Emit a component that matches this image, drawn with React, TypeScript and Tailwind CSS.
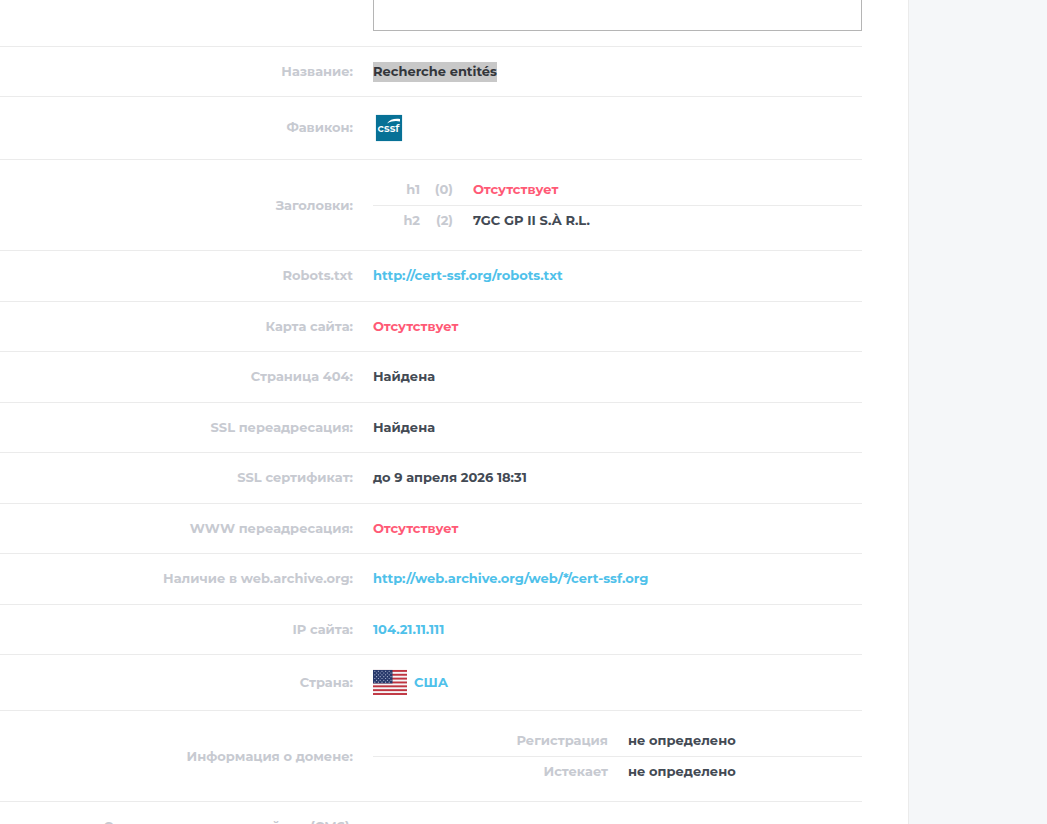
import type { FC, ReactNode } from "react";

interface RowProps {
  label: string;
  children?: ReactNode;
}

const Row: FC<RowProps> = ({ label, children }) => {
  return (
    <tr className="group">
      <th
        scope="row"
        className="w-[353px] border-b border-[#ebebeb] pt-[14px] pb-[15px] text-right font-bold text-[#c7cad1] group-odd:pb-4"
      >
        {label}
      </th>
      <td className="border-b border-[#ebebeb] pt-[14px] pb-[15px] pl-5 group-odd:pb-4">
        {children}
      </td>
    </tr>
  );
};

const Missing = () => <span className="text-[#ff5a76]">Отсутствует</span>;

const TextLink = ({ href, children }: { href: string; children: ReactNode }) => (
  <a href={href} className="text-[#4fc1ea]">
    {children}
  </a>
);

const headings = [
  { tag: "h1", count: 0, text: "" },
  { tag: "h2", count: 2, text: "7GC GP II S.À R.L." },
];

const domainInfo = [
  { name: "Регистрация", value: "не определено" },
  { name: "Истекает", value: "не определено" },
];

const subTable =
  "mt-px w-full border-separate border-spacing-0 [&_tr>*]:border-[#ebebeb] [&_tr>*]:pt-1 [&_tr:first-child>*]:border-b [&_tr:first-child>*]:pb-1.5 [&_tr:last-child>*]:pb-[5px]";

const Headings = () => {
  return (
    <table className={subTable}>
      <tbody>
        {headings.map(({ tag, count, text }) => (
          <tr key={tag}>
            <th
              scope="row"
              className="w-[47px] text-right font-bold text-[#c7cad1]"
            >
              {tag}
            </th>
            <td className="w-[33px] text-right text-[#c7cad1]">({count})</td>
            <td className="pl-5">{text || <Missing />}</td>
          </tr>
        ))}
      </tbody>
    </table>
  );
};

const DomainInfo = () => {
  return (
    <table className={subTable}>
      <tbody>
        {domainInfo.map(({ name, value }) => (
          <tr key={name}>
            <th
              scope="row"
              className="w-[235px] text-right font-bold text-[#c7cad1]"
            >
              {name}
            </th>
            <td className="pl-5">{value}</td>
          </tr>
        ))}
      </tbody>
    </table>
  );
};

const Favicon = () => (
  <svg className="block h-8 w-8" viewBox="0 -1 32 32" role="img" aria-label="cssf">
    <rect x="2.5" y="2.5" width="27" height="27" rx="1" fill="#d5e8ef" />
    <rect x="3" y="3" width="26" height="26" fill="#077196" />
    <path d="M14 11.5C17 7.500 21 6.300 27 7v2.600c-3.500-1-8-.8-13 1.900z" fill="#fff" />
    <text
      x="15.5"
      y="20"
      textAnchor="middle"
      fill="#fff"
      fontSize="11"
      fontWeight="600"
      fontFamily="Montserrat, Lato, sans-serif"
    >
      cssf
    </text>
  </svg>
);

const stripes = [0, 2, 4, 6, 8, 10, 12];
const starRows = [0, 1, 2, 3, 4, 5, 6];

const FlagUS = () => (
  <svg
    className="block h-[25px] w-[34px] overflow-visible"
    viewBox="0 -1 34 26"
    preserveAspectRatio="none"
    aria-hidden="true"
  >
    <rect width="34" height="26" fill="#f5f5f7" />
    {stripes.map((n) => (
      <rect key={n} y={n * 2} width="34" height="2" fill="#bf3440" />
    ))}
    <rect width="19.5" height="14" fill="#28396b" />
    {starRows.map((r) =>
      [0, 1, 2, 3, 4].map((c) => (
        <circle
          key={`${r}-${c}`}
          cx={1.8 + c * 3.6 + (r % 2) * 1.8}
          cy={1.3 + r * 1.9}
          r="0.6"
          fill="#b4bfd8"
        />
      ))
    )}
  </svg>
);

const App = () => {
  return (
    <div className="flex h-screen overflow-hidden bg-white font-['Montserrat','Inter','Noto_Sans',sans-serif] text-[13px] leading-5 font-bold text-[#434a54]">
      <main className="min-w-0 flex-1 pr-[46px]">
        <table className="w-full border-separate border-spacing-0">
          <tbody>
            <tr className="group">
              <th className="w-[353px] border-b border-[#ebebeb]" />
              <td className="border-b border-[#ebebeb] pb-[15px] pl-5">
                <textarea
                  readOnly
                  aria-label="Текст"
                  className="block h-[31px] w-full resize-none border border-t-0 border-[#b5b5b5] bg-white outline-none"
                />
              </td>
            </tr>
            <Row label="Название:">
              <span className="bg-[#c8c8c8] pt-px pb-[3px] text-[#33363b]">
                Recherche entités
              </span>
            </Row>
            <Row label="Фавикон:">
              <Favicon />
            </Row>
            <Row label="Заголовки:">
              <Headings />
            </Row>
            <Row label="Robots.txt">
              <TextLink href="http://cert-ssf.org/robots.txt">
                http://cert-ssf.org/robots.txt
              </TextLink>
            </Row>
            <Row label="Карта сайта:">
              <Missing />
            </Row>
            <Row label="Страница 404:">Найдена</Row>
            <Row label="SSL переадресация:">Найдена</Row>
            <Row label="SSL сертификат:">до 9 апреля 2026 18:31</Row>
            <Row label="WWW переадресация:">
              <Missing />
            </Row>
            <Row label="Наличие в web.archive.org:">
              <TextLink href="http://web.archive.org/web/*/cert-ssf.org">
                http://web.archive.org/web/*/cert-ssf.org
              </TextLink>
            </Row>
            <Row label="IP сайта:">
              <TextLink href="#ip">104.21.11.111</TextLink>
            </Row>
            <Row label="Страна:">
              <div className="flex items-center gap-[7px]">
                <FlagUS />
                <TextLink href="#country">США</TextLink>
              </div>
            </Row>
            <Row label="Информация о домене:">
              <DomainInfo />
            </Row>
            <Row label="Система управления сайтом (CMS):" />
          </tbody>
        </table>
      </main>
      <aside className="w-[139px] shrink-0 border-l border-[#ebebeb] bg-[#f5f7f9]" />
    </div>
  );
};

export default App;
